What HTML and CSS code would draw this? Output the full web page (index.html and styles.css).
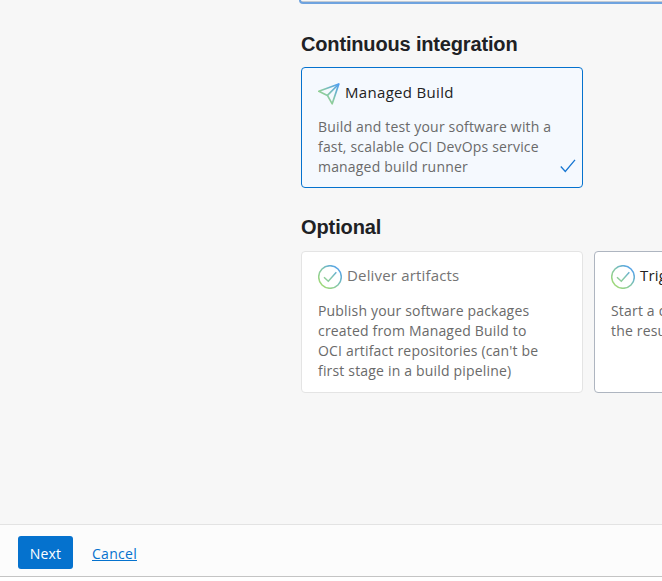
FILE: index.html
```html
<!DOCTYPE html>
<html lang="en">
<head>
<meta charset="utf-8">
<title>Add stage</title>
<link rel="stylesheet" href="styles.css">
</head>
<body>
<svg class="defs" width="0" height="0" aria-hidden="true">
  <defs>
    <linearGradient id="tint" gradientUnits="userSpaceOnUse" x1="3" y1="22" x2="22" y2="3">
      <stop offset="0" stop-color="#a4dc72"/>
      <stop offset="0.5" stop-color="#84c6ac"/>
      <stop offset="1" stop-color="#509ff0"/>
    </linearGradient>
    <symbol id="circle-check" viewBox="0 0 24 24">
      <circle cx="12" cy="12" r="11.3" fill="none" stroke="url(#tint)" stroke-width="1.5"/>
      <path d="M6 12.2 10.3 16.2 18.3 7.2" fill="none" stroke="url(#tint)" stroke-width="1.5"/>
    </symbol>
  </defs>
</svg>
<main class="stages">
  <div class="previous"></div>
  <section>
    <h2>Continuous integration</h2>
    <div class="cards">
      <article class="card selected">
        <header class="card-head">
          <svg class="plane" viewBox="0 0 22 22"><g fill="none" stroke="url(#tint)" stroke-width="1.7" stroke-linejoin="round"><path d="M.8 8.3 20.8 1 14.2 20.8 9.4 12.4Z"/><path d="M9.4 12.4 20.8 1"/></g></svg>
          <h3>Managed Build</h3>
        </header>
        <p>Build and test your software with a<br>fast, scalable OCI DevOps service<br>managed build runner</p>
        <svg class="tick" viewBox="0 0 16 14"><path d="M.8 7.5 5.3 12.4 15 .8" fill="none" stroke="#1676d2" stroke-width="1.3"/></svg>
      </article>
    </div>
  </section>
  <section>
    <h2 class="optional">Optional</h2>
    <div class="cards">
      <article class="card disabled">
        <header class="card-head">
          <svg class="check"><use href="#circle-check"/></svg>
          <h3>Deliver artifacts</h3>
        </header>
        <p>Publish your software packages<br>created from Managed Build to<br>OCI artifact repositories (can't be<br>first stage in a build pipeline)</p>
      </article>
      <article class="card">
        <header class="card-head">
          <svg class="check"><use href="#circle-check"/></svg>
          <h3>Trigger deployment</h3>
        </header>
        <p>Start a deployment with<br>the results of the build</p>
      </article>
    </div>
  </section>
</main>
<footer class="actions">
  <button class="next" type="button">Next</button>
  <a class="cancel" href="#">Cancel</a>
</footer>
</body>
</html>
```

FILE: styles.css
```css
* { box-sizing: border-box; }
body {
  margin: 0;
  height: 581px;
  overflow: hidden;
  background: #fff;
  color: #222;
  font-family: "Open Sans", "Noto Sans", sans-serif;
  font-size: 14px;
}
.defs { position: absolute; }
.stages {
  height: 524px;
  padding-left: 301px;
  overflow: hidden;
  background: #f7f7f7;
}
.previous {
  height: 4px;
  width: 580px;
  margin-left: -2px;
  border: 2px solid #6fa3df;
  border-top: 0;
  border-radius: 0 0 4px 4px;
  background: linear-gradient(#f7f7f7 1px, #c5cbd2 1px);
}
h2 {
  margin: 0;
  padding-top: 28px;
  height: 63px;
  font: bold 20px/24px "Liberation Sans", Arial, sans-serif;
  letter-spacing: -0.16px;
  color: #202124;
}
.cards { display: flex; gap: 11px; width: 600px; }
.card {
  position: relative;
  flex: 0 0 282px;
  height: 142px;
  padding: 12px 16px;
  border: 1px solid #aeb5c0;
  border-radius: 4px;
  background: #fff;
}
.card.selected { height: 121px; border-color: #0572ce; background: #f5f9fe; }
.card.disabled { border-color: #e4e4e4; }
.card-head { display: flex; height: 25px; gap: 5px; }
.plane { width: 22px; height: 22px; margin-top: 3px; }
.check { width: 24px; height: 24px; margin-top: 1px; overflow: visible; }
h3 {
  margin: 0;
  font-size: 15px;
  line-height: 23px;
  font-weight: 400;
  letter-spacing: 0.17px;
  color: #222;
  white-space: nowrap;
}
.selected h3 { line-height: 25px; letter-spacing: 0.32px; }
.disabled h3 { color: #747474; }
p {
  margin: 12px 0 0;
  line-height: 20px;
  letter-spacing: 0.18px;
  color: #6a6a6a;
  white-space: nowrap;
}
.tick { position: absolute; right: 6px; bottom: 14px; width: 16px; height: 14px; }
.optional { padding-top: 27px; letter-spacing: -0.1px; }
.actions {
  display: flex;
  align-items: flex-start;
  gap: 19px;
  height: 53px;
  padding: 11px 18px 0;
  border-top: 1px solid #e3e3e3;
  border-bottom: 1px solid #c4c4c4;
  background: #fcfcfc;
}
.next {
  width: 55px;
  height: 33px;
  padding: 2px 0 0;
  border: 0;
  border-radius: 3px;
  background: #0572ce;
  color: #fff;
  font: inherit;
  letter-spacing: 0.2px;
  line-height: 31px;
}
.cancel { line-height: 36px; letter-spacing: 0.28px; color: #0572ce; text-underline-offset: 1px; }
```
